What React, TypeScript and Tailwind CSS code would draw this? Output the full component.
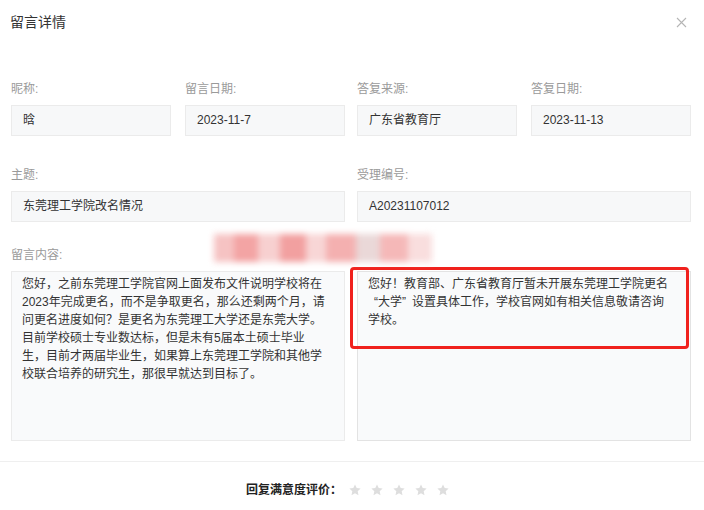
import React from "react";

const font = { fontFamily: '"Liberation Sans", "Noto Sans CJK SC", sans-serif' };

function Field({ label, value, className }: { label: string; value: string; className?: string }) {
  return (
    <div className={"flex flex-col " + (className ?? "")}>
      <div className="h-4 text-[12px] leading-4 text-[#9a9a9a]">{label}</div>
      <div className="mt-2 h-[31px] border border-[#ebebeb] bg-[#f7f8f9] px-[11px] text-[12px] leading-[29px] text-[#333]">
        {value}
      </div>
    </div>
  );
}

function Star() {
  return (
    <svg width="14" height="14" viewBox="0 0 24 24">
      <path
        d="M12 2.5l2.9 6.2 6.7.8-5 4.6 1.4 6.7L12 17.4l-6 3.4 1.4-6.7-5-4.6 6.7-.8z"
        fill="#dedede"
      />
    </svg>
  );
}

export default function App() {
  return (
    <div className="relative h-[510px] w-[704px] overflow-hidden bg-white" style={font}>
      <div className="flex h-[44px] items-center justify-between pl-[10px] pr-[17px]">
        <div className="text-[14px] text-[#333]">留言详情</div>
        <svg width="11" height="11" viewBox="0 0 11 11">
          <path d="M1 1L10 10M10 1L1 10" stroke="#b5b5b5" strokeWidth="1.1" />
        </svg>
      </div>

      <div className="px-[11px] pt-[37px]">
        <div className="flex">
          <Field label="昵称:" value="晗" className="w-[160px]" />
          <Field label="留言日期:" value="2023-11-7" className="ml-[14px] w-[160px]" />
          <Field label="答复来源:" value="广东省教育厅" className="ml-[12px] w-[160px]" />
          <Field label="答复日期:" value="2023-11-13" className="ml-[14px] w-[160px]" />
        </div>

        <div className="mt-[31px] flex">
          <Field label="主题:" value="东莞理工学院改名情况" className="w-[334px]" />
          <Field label="受理编号:" value="A20231107012" className="ml-[12px] w-[334px]" />
        </div>

        <div className="mt-[25px] h-4 text-[12px] leading-4 text-[#9a9a9a]">留言内容:</div>
        <div className="mt-2 flex">
          <div className="h-[170px] w-[334px] border border-[#ebebeb] bg-[#f9fafb] pl-[10px] pr-[17px] py-[3px] text-[12px] leading-[18px] text-[#333]">
            您好，之前东莞理工学院官网上面发布文件说明学校将在2023年完成更名，而不是争取更名，那么还剩两个月，请问更名进度如何？是更名为东莞理工大学还是东莞大学。目前学校硕士专业数达标，但是未有5届本土硕士毕业生，目前才两届毕业生，如果算上东莞理工学院和其他学校联合培养的研究生，那很早就达到目标了。
          </div>
          <div className="relative ml-[12px] h-[170px] w-[334px] border border-[#e3e3e3] bg-[#f9fafb] pl-[10px] pr-[17px] py-[3px] text-[12px] leading-[18px] text-[#333]">
            您好！教育部、广东省教育厅暂未开展东莞理工学院更名<wbr />
            <span className="ml-[6px]">“大学”</span>
            <span className="ml-[6px]">设置具体工作，学校官网如有相关信息敬请咨询学校。</span>
            <div className="absolute left-[-8px] top-[-5px] h-[82px] w-[339px] rounded-[4px] border-[3px] border-[#f0211d]" />
          </div>
        </div>
      </div>

      {/* redaction mosaic */}
      <div className="absolute left-[214px] top-[234px] flex h-[28px] w-[218px] blur-[3px]">
        <div className="h-full w-[20px] bg-[#f6c3c3]" />
        <div className="h-full w-[24px] bg-[#f3a4a4]" />
        <div className="h-full w-[22px] bg-[#f7d0d0]" />
        <div className="h-full w-[26px] bg-[#f2a0a0]" />
        <div className="h-full w-[20px] bg-[#f8d6d6]" />
        <div className="h-full w-[30px] bg-[#f4b0b0]" />
        <div className="h-full w-[24px] bg-[#ead8d8]" />
        <div className="h-full w-[28px] bg-[#f5b8b8]" />
        <div className="h-full w-[24px] bg-[#f9dede]" />
      </div>

      <div className="mt-[20px] border-t border-[#efefef]" />
      <div className="flex items-center pl-[246px] pt-[19px]">
        <span className="text-[12px] font-bold text-[#222]">回复满意度评价：</span>
        <div className="ml-[6px] flex gap-[8px]">
          <Star />
          <Star />
          <Star />
          <Star />
          <Star />
        </div>
      </div>
    </div>
  );
}
